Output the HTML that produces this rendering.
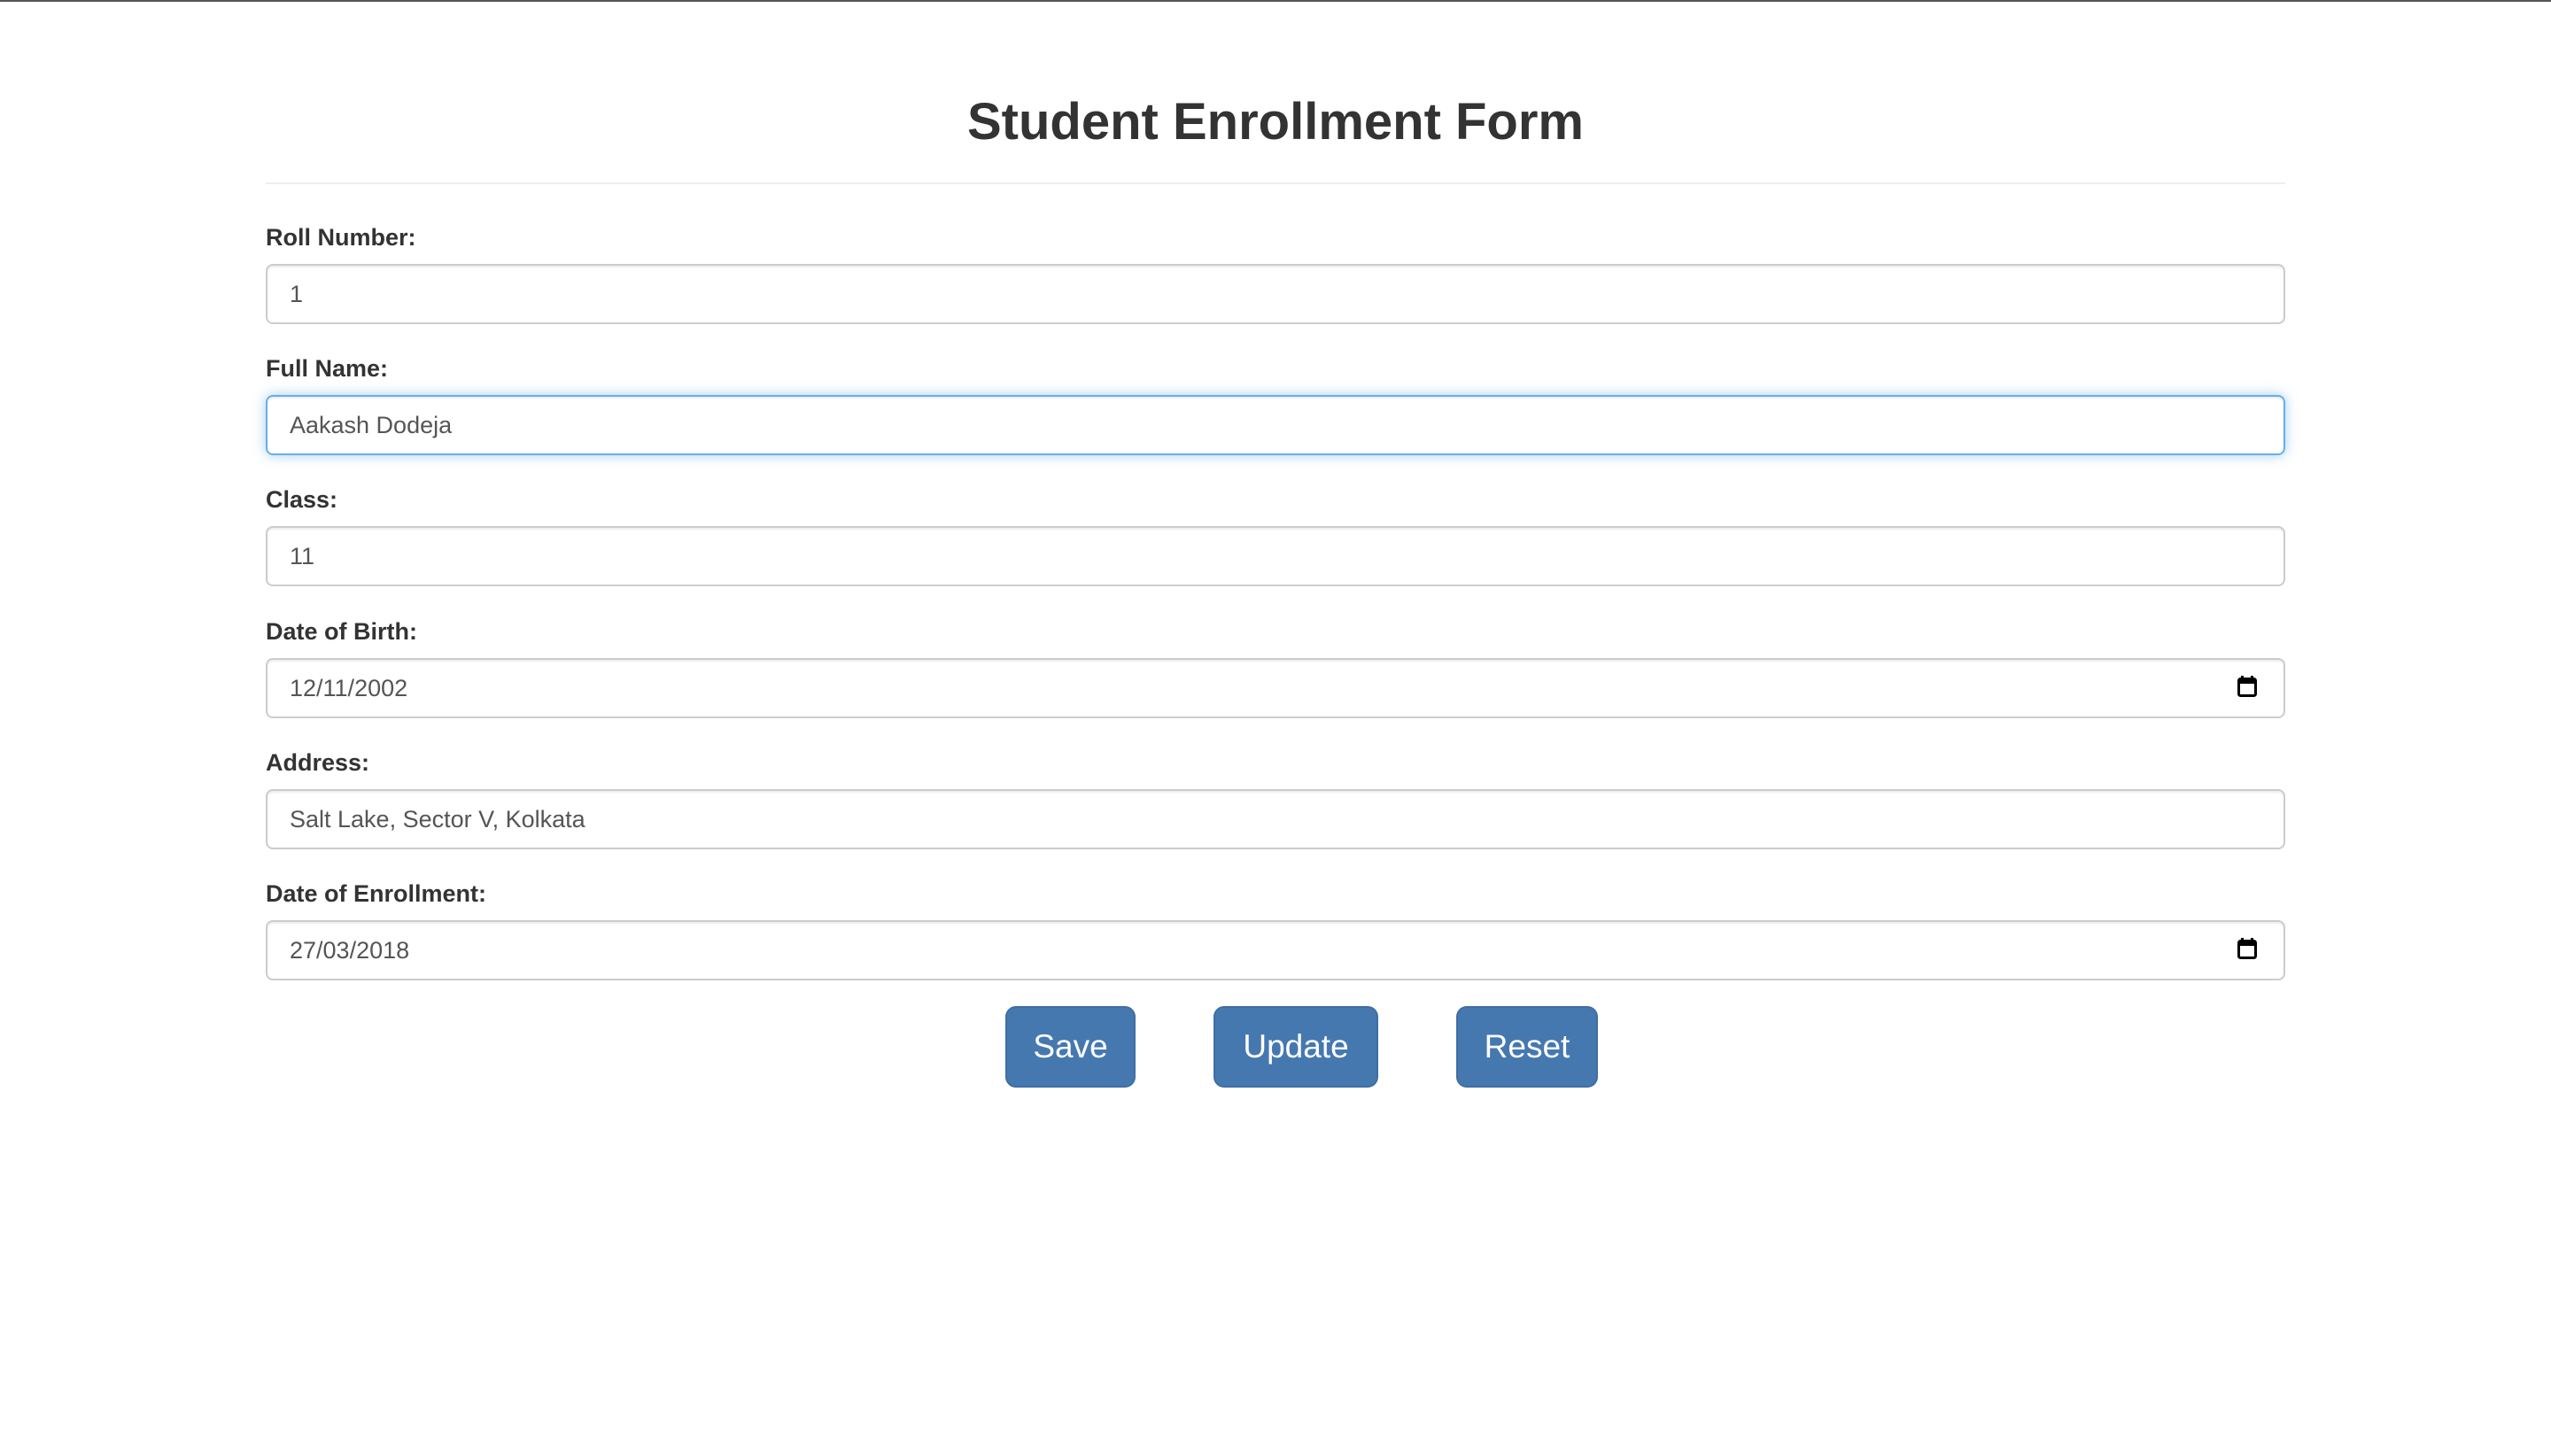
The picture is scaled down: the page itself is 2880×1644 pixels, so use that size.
<!DOCTYPE html>
<html><head><meta charset="utf-8"><style>
body{margin:0;width:2880px;height:1644px;background:#fff;font-family:"Liberation Sans",Arial,sans-serif;position:relative;overflow:hidden;color:#333}
.top{position:absolute;left:0;top:0;width:2880px;height:2px;background:#555}
h1{position:absolute;left:0;width:2880px;top:93px;margin:0;text-align:center;font-size:58px;line-height:90px;font-weight:bold;color:#333}
.hr{position:absolute;left:300px;width:2280px;top:206px;height:2px;background:#eee}
.lbl{position:absolute;left:300px;font-size:27px;font-weight:bold;color:#333;line-height:30px}
.in{position:absolute;left:300px;border:2px solid #ccc;border-radius:8px;font-size:27px;color:#555;line-height:64px;padding-left:25px;box-sizing:border-box;width:2280px;height:68px;box-shadow:inset 0 2px 2px rgba(0,0,0,.075)}
.focus{border-color:#66afe9;box-shadow:inset 0 2px 2px rgba(0,0,0,.075),0 0 14px rgba(102,175,233,.6)}
.cal{position:absolute;right:30px;top:18px;width:22px;height:24px}
.btn{position:absolute;top:1136px;height:92px;background:#4678b0;border:2px solid #3f6ea3;border-radius:12px;color:#fff;font-size:37px;line-height:88px;text-align:center;box-sizing:border-box}
</style></head><body>
<div class="top"></div>
<h1>Student Enrollment Form</h1>
<div class="hr"></div>

<div class="lbl" style="top:253px">Roll Number:</div>
<div class="in" style="top:298px">1</div>
<div class="lbl" style="top:401px">Full Name:</div>
<div class="in focus" style="top:446px">Aakash Dodeja</div>
<div class="lbl" style="top:549px">Class:</div>
<div class="in" style="top:594px">11</div>
<div class="lbl" style="top:698px">Date of Birth:</div>
<div class="in" style="top:743px">12/11/2002<svg class="cal" viewBox="0 0 22 24"><rect x="1.5" y="3.5" width="19" height="19" rx="2" fill="none" stroke="#000" stroke-width="3"/><rect x="1" y="3" width="20" height="6" fill="#000"/><rect x="4" y="0" width="3" height="5" fill="#000"/><rect x="15" y="0" width="3" height="5" fill="#000"/></svg></div>
<div class="lbl" style="top:846px">Address:</div>
<div class="in" style="top:891px">Salt Lake, Sector V, Kolkata</div>
<div class="lbl" style="top:994px">Date of Enrollment:</div>
<div class="in" style="top:1039px">27/03/2018<svg class="cal" viewBox="0 0 22 24"><rect x="1.5" y="3.5" width="19" height="19" rx="2" fill="none" stroke="#000" stroke-width="3"/><rect x="1" y="3" width="20" height="6" fill="#000"/><rect x="4" y="0" width="3" height="5" fill="#000"/><rect x="15" y="0" width="3" height="5" fill="#000"/></svg></div>

<div class="btn" style="left:1135px;width:147px">Save</div>
<div class="btn" style="left:1370px;width:186px">Update</div>
<div class="btn" style="left:1644px;width:160px">Reset</div>
</body></html>
